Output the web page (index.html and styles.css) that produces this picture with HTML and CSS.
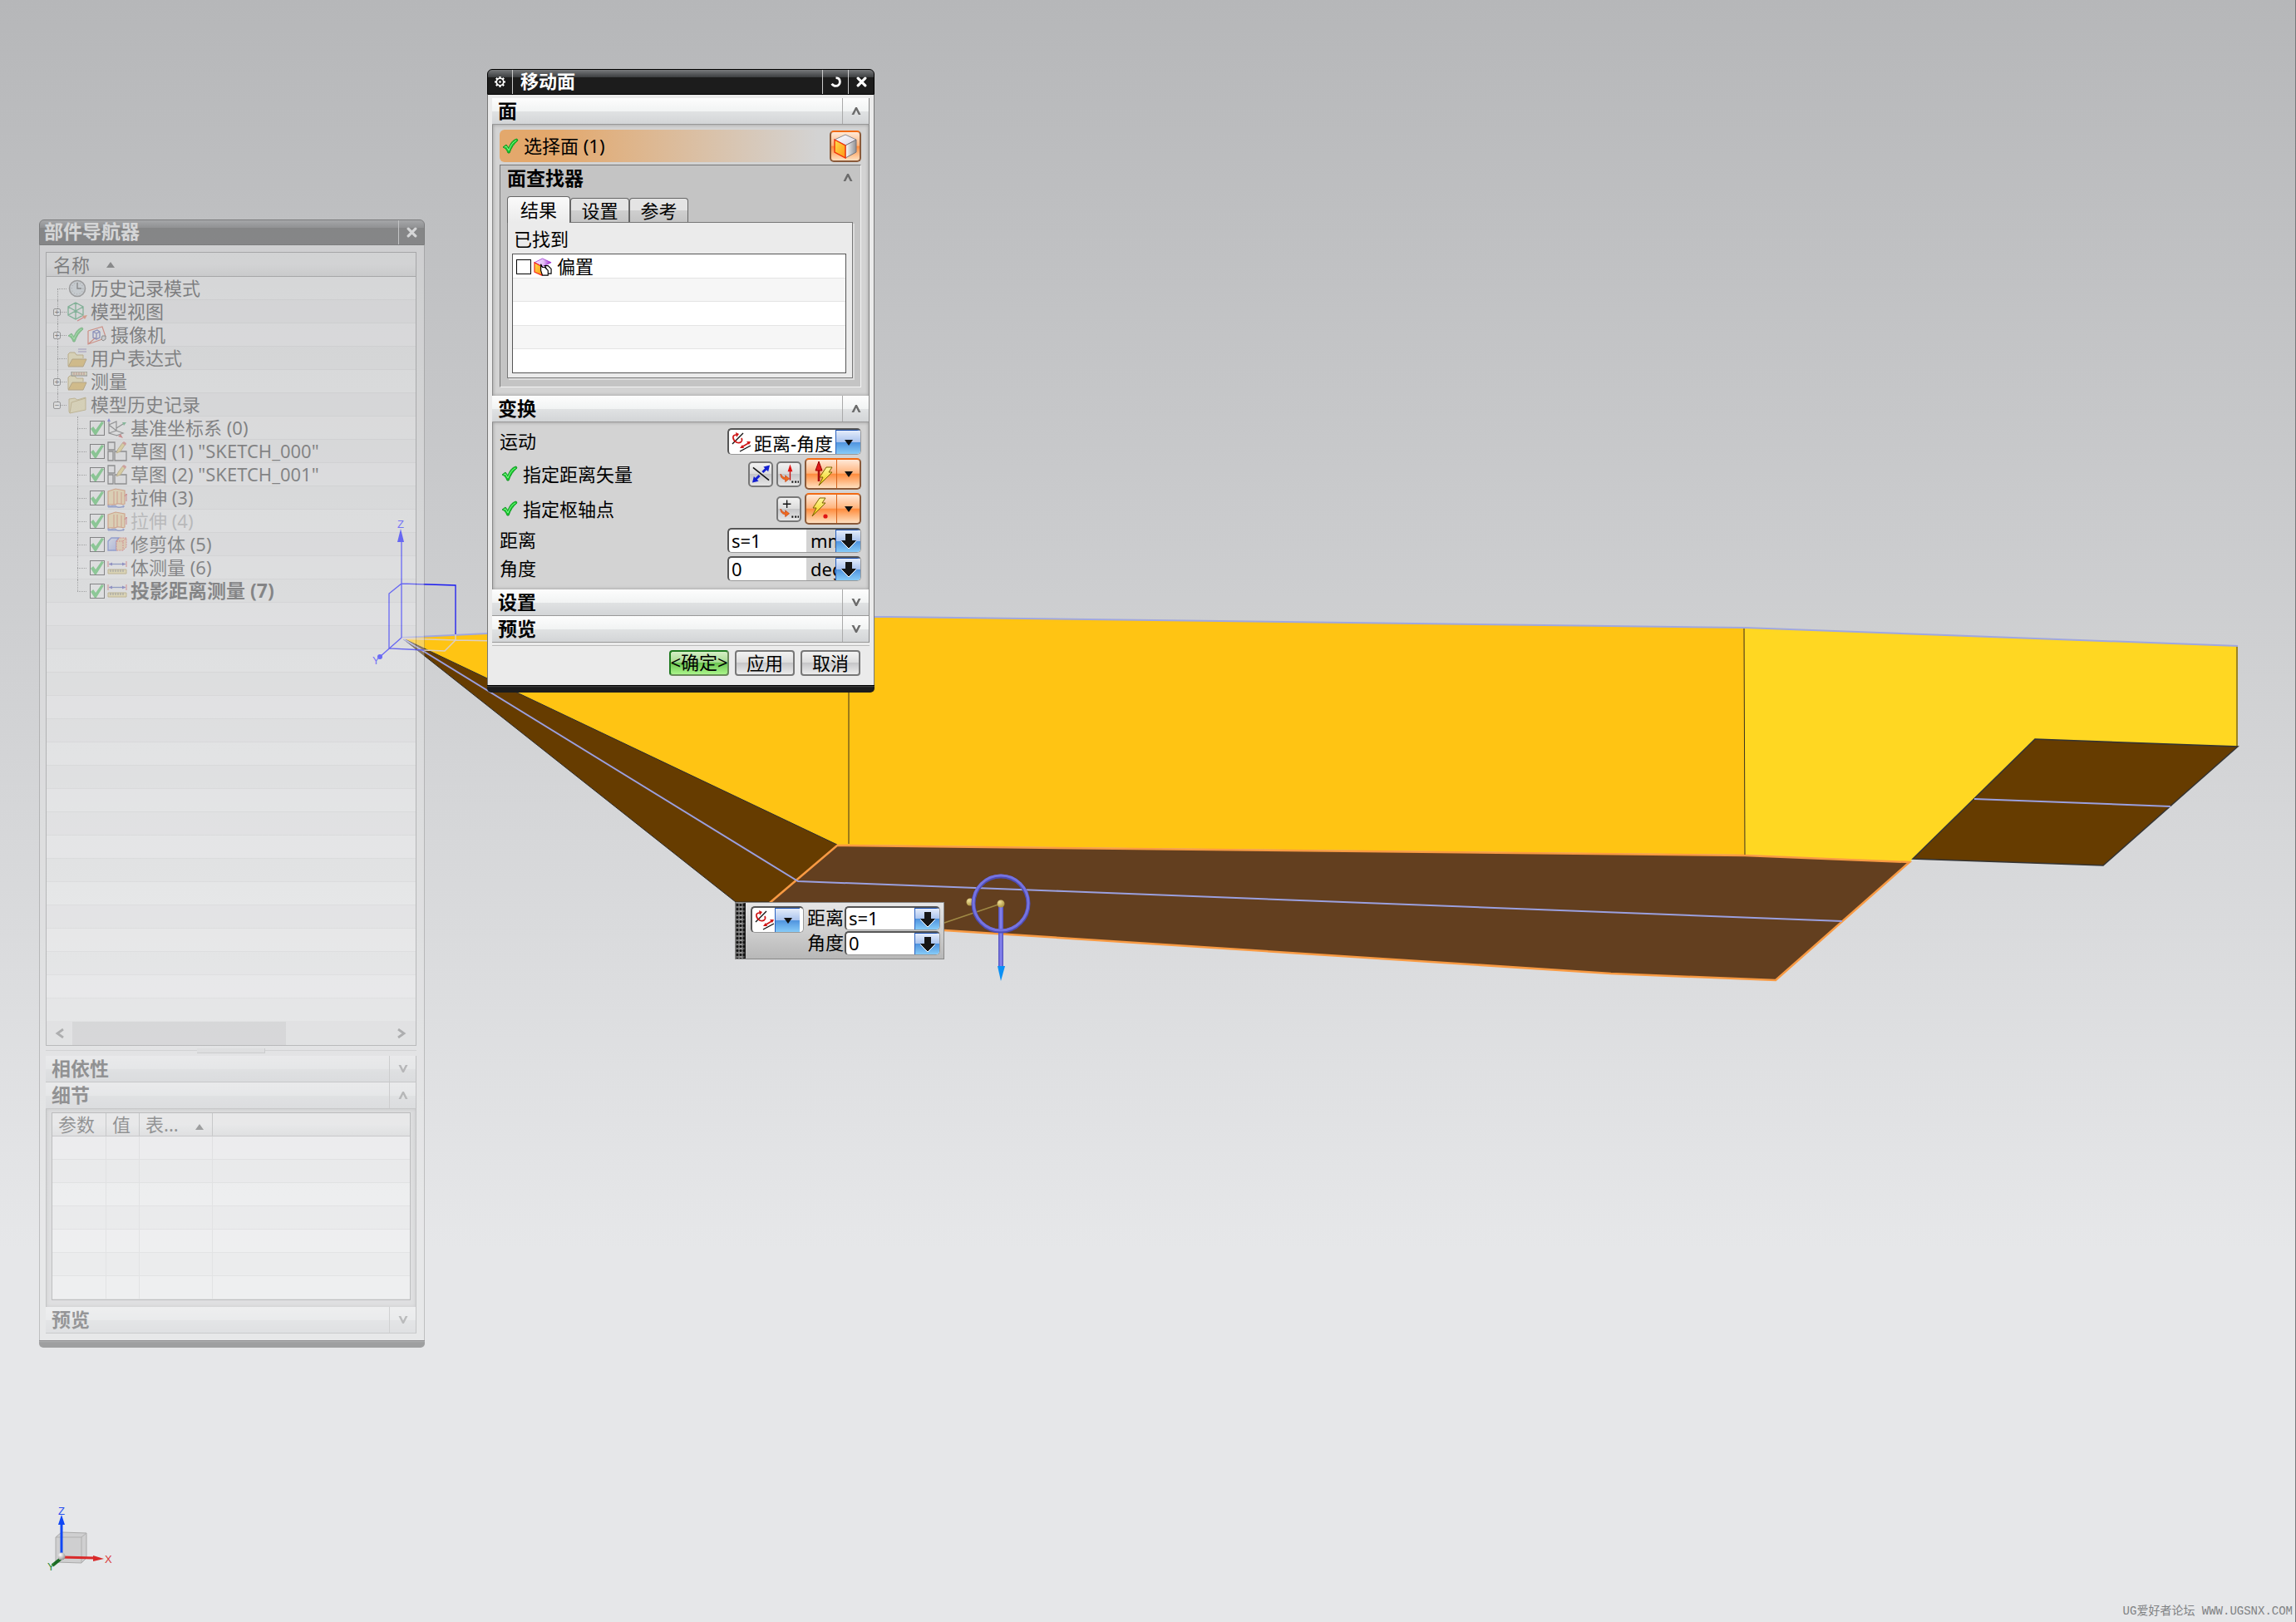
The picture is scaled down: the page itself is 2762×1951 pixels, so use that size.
FILE: index.html
```html
<!DOCTYPE html>
<html lang="zh-CN">
<head>
<meta charset="utf-8">
<title>移动面</title>
<link rel="stylesheet" href="styles.css">
</head>
<body>
<svg class="defs" width="0" height="0" aria-hidden="true">
  <defs>
    <linearGradient id="g-orange" x1="0" y1="0" x2="1" y2="1"><stop offset="0" stop-color="#ffe04a"/><stop offset="1" stop-color="#ff9416"/></linearGradient>
    <linearGradient id="g-white" x1="0" y1="0" x2="1" y2="0"><stop offset="0" stop-color="#fff"/><stop offset="1" stop-color="#8e8e92"/></linearGradient>
    <linearGradient id="g-top" x1="0" y1="0" x2="1" y2="1"><stop offset="0" stop-color="#fff"/><stop offset="1" stop-color="#d9d4e4"/></linearGradient>
    <linearGradient id="g-purple" x1="0" y1="0" x2="1" y2="0"><stop offset="0" stop-color="#f4e4ff"/><stop offset=".55" stop-color="#e3bdf7"/><stop offset="1" stop-color="#9422c8"/></linearGradient>
    <linearGradient id="g-bolt" x1="0" y1="0" x2="0" y2="1"><stop offset="0" stop-color="#fff9a0"/><stop offset="1" stop-color="#f0c800"/></linearGradient>
    <linearGradient id="g-blue" x1="0" y1="0" x2="1" y2="1"><stop offset="0" stop-color="#dfe6ff"/><stop offset="1" stop-color="#7186e8"/></linearGradient>
    <radialGradient id="g-ball" cx=".35" cy=".3" r=".8"><stop offset="0" stop-color="#fff"/><stop offset="1" stop-color="#8b8b8b"/></radialGradient>
    <radialGradient id="g-gold" cx=".35" cy=".3" r=".8"><stop offset="0" stop-color="#efe09a"/><stop offset="1" stop-color="#a58b35"/></radialGradient>
  </defs>
  <symbol id="i-check" viewBox="0 0 20 20"><path d="M1 11l4-3 3 4C10 6 13 2 18 1l1 2c-5 4-8 9-10 15H7C6 15 4 12 1 11z" fill="#17c92e" stroke="#0a8a1c" stroke-width=".8"/><path d="M3 11l2-1 3 5C10 9 13 5 17 3" fill="none" stroke="#86f58e" stroke-width="1"/></symbol>
  <symbol id="i-up" viewBox="0 0 12 12"><path d="M0 11L5 1h2l5 10H9L6 5l-3 6z" fill="#6b6b6b"/></symbol>
  <symbol id="i-down" viewBox="0 0 12 12"><path d="M0 1l5 10h2l5-10H9L6 7 3 1z" fill="#6b6b6b"/></symbol>
  <symbol id="i-left" viewBox="0 0 12 12"><path d="M10 1L3 6l7 5" fill="none" stroke="#555" stroke-width="2.800"/></symbol>
  <symbol id="i-right" viewBox="0 0 12 12"><path d="M2 1l7 5-7 5" fill="none" stroke="#555" stroke-width="2.800"/></symbol>
  <symbol id="i-close" viewBox="0 0 12 12"><path d="M2 2l8 8M10 2l-8 8" stroke="#fff" stroke-width="3" stroke-linecap="round" fill="none"/></symbol>
  <symbol id="i-gear" viewBox="0 0 14 14"><path d="M7 0v3M7 11v3M0 7h3M11 7h3M2 2l2 2M10 10l2 2M12 2l-2 2M4 10l-2 2" stroke="#fff" stroke-width="2.400"/><circle cx="7" cy="7" r="4.600" fill="none" stroke="#fff" stroke-width="1.800"/><circle cx="7" cy="7" r="1.400" fill="#fff"/></symbol>
  <symbol id="i-reset" viewBox="0 0 12 12"><path d="M6 1.500c3 0 4.500 2 4.500 4.500S8.500 10.500 6 10.500C4 10.500 2.500 9.500 1.500 8" fill="none" stroke="#fff" stroke-width="2.600"/></symbol>
  <symbol id="i-cube" viewBox="0 0 28 30"><path d="M14 1l13 6-13 7L1 7z" fill="url(#g-top)" stroke="#8c8c94"/><path d="M14 14l13-7v15l-13 7z" fill="url(#g-white)" stroke="#77777c"/><path d="M1 7l13 7v15L1 22z" fill="url(#g-orange)" stroke="#f0320a" stroke-width="1.400"/></symbol>
  <symbol id="i-offset" viewBox="0 0 24 24"><path d="M11 1l11 5-11 5L1 6z" fill="url(#g-purple)" stroke="#9c2fd0" stroke-width=".8"/><path d="M1 6l9 5v11L1 18z" fill="url(#g-orange)" stroke="#f5201a" stroke-width="1.200"/><path d="M14 10h4l4 4v6h-6v-6z" fill="#fff" stroke="#000" stroke-width="1.200"/><path d="M11 22l-2-6V8l2 4h3l4 4v6z" fill="#fff" stroke="#000" stroke-width="1.200"/></symbol>
  <symbol id="i-motion" viewBox="0 0 24 24"><path d="M1 14L14 1M10 23l13-7" stroke="#111" stroke-width="1.400"/><path d="M6 3C0 3 1 9 6 12c4 2 8-1 6-5" fill="none" stroke="#cf1717" stroke-width="1.700"/><path d="M5 0l4 2-3 4z" fill="#cf1717"/><path d="M12 18l10-6" stroke="#cf1717" stroke-width="1.600"/><path d="M10 19l3-4 2 4zM23 11l-5 0 3 4z" fill="#cf1717"/></symbol>
  <symbol id="i-reverse" viewBox="0 0 24 24"><path d="M2 4l20 16" stroke="#111" stroke-width="1.600"/><path d="M14 10l5-5M10 14l-5 5" stroke="#1420d0" stroke-width="3"/><path d="M23 1l-2 8-6-6zM1 23l2-8 6 6z" fill="#1420d0"/></symbol>
  <symbol id="i-vec" viewBox="0 0 24 24"><path d="M13 8v12" stroke="#c01010" stroke-width="1.400"/><path d="M13 0l3 9h-6z" fill="#d11"/><path d="M1 12c0 5 3 7 6 7v3l5-4-5-4v3c-2 0-4-2-6-5z" fill="#f26b1d" stroke="#c41" stroke-width=".8"/><path d="M15 22h2M19 22h2M22.500 22h2" stroke="#111" stroke-width="2.400"/></symbol>
  <symbol id="i-pt" viewBox="0 0 24 24"><path d="M9 1v10M4 6h10" stroke="#111" stroke-width="1.400"/><path d="M1 12c0 5 3 7 6 7v3l5-4-5-4v3c-2 0-4-2-6-5z" fill="#f26b1d" stroke="#c41" stroke-width=".8"/><path d="M15 22h2M19 22h2M22.500 22h2" stroke="#111" stroke-width="2.400"/></symbol>
  <symbol id="i-vecbolt" viewBox="0 0 30 32"><path d="M12 10v15" stroke="#a80f0f" stroke-width="2.600"/><path d="M12 1l4 11H8z" fill="#e01b1b" stroke="#900"/><path d="M21 8h7l-4 6h4L12 30l5-10h-4z" fill="url(#g-bolt)" stroke="#7a6200" stroke-width="1"/></symbol>
  <symbol id="i-ptbolt" viewBox="0 0 30 32"><path d="M13 3h7l-4 6h4L4 25l5-10H5z" fill="url(#g-bolt)" stroke="#7a6200" stroke-width="1"/><circle cx="20" cy="25" r="2.600" fill="#e01414"/></symbol>
  <symbol id="i-tri" viewBox="0 0 10 7"><path d="M0 0h10L5 7z" fill="#111"/></symbol>
  <symbol id="i-bigdown" viewBox="0 0 20 20"><path d="M6 1h8v8h5l-9 10-9-10h5z" fill="#161616"/><path d="M1 10l9 9 9-9" fill="none" stroke="#fff" stroke-width="1"/></symbol>
  <symbol id="i-sort" viewBox="0 0 10 7"><path d="M5 0l5 7H0z" fill="#222"/></symbol>
  <symbol id="i-clock" viewBox="0 0 24 24"><circle cx="12" cy="12" r="9.500" fill="#cfdbe2" stroke="#555" stroke-width="1.600"/><circle cx="12" cy="12" r="6.800" fill="none" stroke="#666" stroke-dasharray="1 2.500"/><path d="M12 5v7h5" fill="none" stroke="#222" stroke-width="1.400"/></symbol>
  <symbol id="i-view" viewBox="0 0 24 24"><path d="M10 1l9 5v10l-9 5-9-5V6zM1 6l9 5 9-5M10 1v20M1 16l9-5 9 5" fill="none" stroke="#0b8d43" stroke-width="1.300"/><path d="M12 23l9-5" stroke="#d22" stroke-width="1.400"/><path d="M24 16l-3 5-3-4z" fill="#e52"/></symbol>
  <symbol id="i-cam" viewBox="0 0 24 24"><path d="M1 7l17-5 4 12M1 7v16l17-6M1 23l9-8" fill="none" stroke="#e03012" stroke-width="1.200"/><path d="M7 8l5-2 3 2v7l-4 2-4-2zM7 8l4 2 4-2M11 10v7" fill="none" stroke="#2230a0" stroke-width="1.300"/><path d="M18 13h4v4l-3 2-2-2z" fill="#ddd" stroke="#222"/></symbol>
  <symbol id="i-fopen" viewBox="0 0 24 24"><path d="M1 21V7l2-2h6l2 3h8v4" fill="#f7e79a" stroke="#a88220"/><path d="M1 22l5-9h17l-4 9z" fill="#e6a81c" stroke="#946a10"/></symbol>
  <symbol id="i-expr" viewBox="0 0 24 24"><use href="#i-fopen"/><path d="M13 1h10M13 4h10" stroke="#5a4aa0" stroke-width="1.200"/></symbol>
  <symbol id="i-meas" viewBox="0 0 24 24"><use href="#i-fopen"/><path d="M5 0h19v5H5z" fill="#e8dca0" stroke="#333"/><path d="M8 1v3M11 1v3M14 1v3M17 1v3M20 1v3" stroke="#a33"/></symbol>
  <symbol id="i-fold" viewBox="0 0 24 24"><path d="M2 20V5l7-1 3 2 10-3v15L3 22z" fill="#f2e29a" stroke="#b09238"/><path d="M3 22L5 9l17-5" fill="none" stroke="#b09238"/></symbol>
  <symbol id="i-csys" viewBox="0 0 24 24"><path d="M2 4v14l10 3M2 8l9 7M2 8l9-4v11M11 15l8 3-8 3M11 12l8-5M2 18l9-3" fill="none" stroke="#333" stroke-width="1.200"/><path d="M2 0l2 4H0z" fill="#22c"/><path d="M23 5l-5 0 2 4z" fill="#194"/><path d="M19 24l-6-2 3-3z" fill="#c22"/></symbol>
  <symbol id="i-sketch" viewBox="0 0 24 24"><path d="M1 1h8v9H1zM1 12h6v11H1zM9 12h14v11H9z" fill="#f6f6f6" stroke="#222" stroke-width="1.300"/><path d="M11 14l2-5 6-8 3 2-6 9z" fill="#f0d25a" stroke="#8b6b1a" stroke-width=".8"/><path d="M18 2l2-2 3 2-1 3z" fill="#d9534a"/></symbol>
  <symbol id="i-extrude" viewBox="0 0 24 24"><path d="M1 20c3 4 7-1 10 2s6 1 9-1v2H1z" fill="#6f8fe8" stroke="#2a47b8"/><path d="M1 4l9-3 11 2v16c-3 2-5-1-9 0-4 2-7 0-11 1z" fill="#f9d88a" stroke="#d8601a" stroke-width="1.200"/><path d="M8 4v15M12 4v15M17 5v14" stroke="#d8481a" stroke-width="1"/><path d="M23 8v8M21 10l2-3 2 3" stroke="#c11" fill="none"/></symbol>
  <symbol id="i-trim" viewBox="0 0 24 24"><path d="M1 8l4-4h9l-3 4v11H1z" fill="url(#g-blue)" stroke="#2a47c8" stroke-width="1.300"/><path d="M11 8l4-4h8v11l-4 4h-8zM11 8h8v11M19 8l4-4" fill="#f5c98a" stroke="#d22" stroke-dasharray="2 1"/></symbol>
  <symbol id="i-ruler" viewBox="0 0 24 24"><path d="M1 4v7M23 4v7" stroke="#d22"/><path d="M2 7.500h20" stroke="#24a" stroke-width="1.300"/><path d="M2 7.500l4-2v4zM22 7.500l-4-2v4z" fill="#22a"/><path d="M1 14h22v5H1z" fill="#f3e08a" stroke="#a88a28"/><path d="M4 14v3M7 14v3M10 14v3M13 14v3M16 14v3M19 14v3" stroke="#444"/></symbol>
</svg>

<main class="viewport">
  <svg class="scene" viewBox="0 0 2762 1951" preserveAspectRatio="xMinYMin meet" role="img" aria-label="模型">
    <path d="M483 767L586 762 1022 742H1070L2099 755V1028L1007 1016z" fill="#ffc413"/>
    <path d="M2099 755L2692 777V898L2448 889 2301 1033 2297 1037 2099 1028z" fill="#ffd722"/>
    <path d="M483 767L1007 1016 928 1085 885 1085z" fill="#663c00" stroke="#2b2b2b"/>
    <path d="M2448 889L2692 898 2530 1041 2301 1033z" fill="#663c00" stroke="#333" stroke-width="1.500"/>
    <path d="M1007 1017L2099 1029 2297 1037 2136 1179 1938 1171 1136 1119 900 1108z" fill="#633f1f" stroke="#f89a43" stroke-width="2.500"/>
    <path d="M1021 742V1015M2098 755L2099 1028M2691 777V898" stroke="#3a3320" fill="none"/>
    <path d="M483 767L586 762 1022 742H1070L2099 755 2692 777" fill="none" stroke="#a0a7de" stroke-width="2"/>
    <path d="M483 767L960 1060 1280 1072 2216 1108M2375 961L2611 970" fill="none" stroke="#9ba0df" stroke-width="2"/>
    <path d="M483 768L548 770 600 771M548 763V770L535 783 510 782" fill="none" stroke="#dccfc4" stroke-width="1.500"/>
    <g fill="none" stroke="#1a1af0" stroke-width="1.300"><path d="M548 763V704L483 702 468 714V780L510 782M483 767L457 790M483 650V767"/></g>
    <path d="M482 636l4 16h-8z" fill="#1a1af0"/><circle cx="457" cy="790" r="3" fill="#1a1af0"/>
    <text x="478" y="635" class="axis" fill="#2a2af0">Z</text><text x="448" y="799" class="axis" fill="#2a2af0">Y</text>

    <path d="M1130 1112L1204 1087" stroke="#a08a45" stroke-width="1.500"/>
    <circle cx="1167" cy="1085" r="4.500" fill="url(#g-gold)"/>
    <path d="M1204 1087V1162" stroke="#5a58c4" stroke-width="6"/><path d="M1204 1087V1162" stroke="#8280ec" stroke-width="3"/>
    <circle cx="1204" cy="1087" r="33" fill="none" stroke="#4e4cb4" stroke-width="5"/><circle cx="1204" cy="1086" r="33" fill="none" stroke="#7573e0" stroke-width="3"/>
    <path d="M1200 1162h9l-5 18z" fill="#0a90f5"/><circle cx="1204" cy="1087" r="4.500" fill="url(#g-gold)"/>

    <path d="M67 1849l7-6 30 1v30l-6 6-31-1z" fill="#cfcfd0" stroke="#aaa"/><path d="M67 1849h31v31M98 1849l6-5M74 1843v31h30" fill="none" stroke="#b0b0b0"/>
    <path d="M74 1872V1832" stroke="#1148f5" stroke-width="3"/><path d="M74 1822l4 12h-8z" fill="#1148f5"/>
    <path d="M74 1873L114 1874" stroke="#d92b2b" stroke-width="3"/><path d="M125 1875l-13-4v7z" fill="#d92b2b"/>
    <path d="M73 1875L63 1883" stroke="#1b6b25" stroke-width="4"/><circle cx="74" cy="1872" r="4.500" fill="url(#g-ball)"/>
    <text x="70" y="1822" class="axis" fill="#2a50f0">Z</text><text x="126" y="1880" class="axis" fill="#d93a3a">X</text><text x="57" y="1889" class="axis" fill="#2d8a3a">Y</text>
  </svg>

  <section class="window navigator" aria-label="部件导航器">
    <header class="titlebar"><h2>部件导航器</h2><button class="tb-btn" aria-label="关闭"><svg><use href="#i-close"/></svg></button></header>
    <div class="window-body">
      <div class="tree">
        <div class="col-head"><span>名称</span><svg><use href="#i-sort"/></svg></div>
        <ul class="rows">
          <li class="first"><span class="exp none"></span><svg><use href="#i-clock"/></svg><span>历史记录模式</span></li>
          <li><button class="exp" aria-label="展开">+</button><svg><use href="#i-view"/></svg><span>模型视图</span></li>
          <li><button class="exp" aria-label="展开">+</button><svg class="tick"><use href="#i-check"/></svg><svg><use href="#i-cam"/></svg><span>摄像机</span></li>
          <li><span class="exp none"></span><svg><use href="#i-expr"/></svg><span>用户表达式</span></li>
          <li><button class="exp" aria-label="展开">+</button><svg><use href="#i-meas"/></svg><span>测量</span></li>
          <li class="last"><button class="exp" aria-label="折叠">−</button><svg><use href="#i-fold"/></svg><span>模型历史记录</span></li>
          <li class="child"><input type="checkbox" id="n0" checked><svg><use href="#i-csys"/></svg><label for="n0">基准坐标系 (0)</label></li>
          <li class="child"><input type="checkbox" id="n1" checked><svg><use href="#i-sketch"/></svg><label for="n1">草图 (1) "SKETCH_000"</label></li>
          <li class="child"><input type="checkbox" id="n2" checked><svg><use href="#i-sketch"/></svg><label for="n2">草图 (2) "SKETCH_001"</label></li>
          <li class="child"><input type="checkbox" id="n3" checked><svg><use href="#i-extrude"/></svg><label for="n3">拉伸 (3)</label></li>
          <li class="child dim"><input type="checkbox" id="n4" checked><svg><use href="#i-extrude"/></svg><label for="n4">拉伸 (4)</label></li>
          <li class="child"><input type="checkbox" id="n5" checked><svg><use href="#i-trim"/></svg><label for="n5">修剪体 (5)</label></li>
          <li class="child"><input type="checkbox" id="n6" checked><svg><use href="#i-ruler"/></svg><label for="n6">体测量 (6)</label></li>
          <li class="child last strong"><input type="checkbox" id="n7" checked><svg><use href="#i-ruler"/></svg><label for="n7">投影距离测量 (7)</label></li>
        </ul>
        <div class="hscroll"><svg><use href="#i-left"/></svg><span class="thumb"></span><svg class="right"><use href="#i-right"/></svg></div>
      </div>
      <div class="splitter"><span></span></div>
      <button class="section-head"><span>相依性</span><i><svg><use href="#i-down"/></svg></i></button>
      <button class="section-head"><span>细节</span><i><svg><use href="#i-up"/></svg></i></button>
      <div class="section-box details">
        <table>
          <thead><tr><th class="c1">参数</th><th class="c2">值</th><th class="c3"><span>表...</span><svg><use href="#i-sort"/></svg></th><th></th></tr></thead>
          <tbody>
            <tr><td></td><td></td><td></td><td></td></tr><tr><td></td><td></td><td></td><td></td></tr><tr><td></td><td></td><td></td><td></td></tr><tr><td></td><td></td><td></td><td></td></tr><tr><td></td><td></td><td></td><td></td></tr><tr><td></td><td></td><td></td><td></td></tr><tr><td></td><td></td><td></td><td></td></tr>
          </tbody>
        </table>
      </div>
      <button class="section-head"><span>预览</span><i><svg><use href="#i-down"/></svg></i></button>
    </div>
    <div class="window-foot"></div>
  </section>

  <section class="window dialog" role="dialog" aria-label="移动面">
    <header class="titlebar"><button class="tb-btn menu" aria-label="选项"><svg><use href="#i-gear"/></svg></button><h2>移动面</h2><button class="tb-btn" aria-label="重置"><svg><use href="#i-reset"/></svg></button><button class="tb-btn" aria-label="关闭"><svg><use href="#i-close"/></svg></button></header>
    <div class="window-body">
      <button class="section-head"><span>面</span><i><svg><use href="#i-up"/></svg></i></button>
      <div class="section-box">
        <div class="select-row"><svg class="ok"><use href="#i-check"/></svg><span>选择面 (1)</span><button class="hot cube" aria-label="面"><svg><use href="#i-cube"/></svg></button></div>
        <div class="group">
          <div class="group-head"><span>面查找器</span><svg><use href="#i-up"/></svg></div>
          <div class="tabs" role="tablist"><button role="tab" class="on">结果</button><button role="tab">设置</button><button role="tab">参考</button></div>
          <div class="tab-panel">
            <p>已找到</p>
            <ul class="found"><li><input type="checkbox" id="off"><svg><use href="#i-offset"/></svg><label for="off">偏置</label></li></ul>
          </div>
        </div>
      </div>
      <button class="section-head"><span>变换</span><i><svg><use href="#i-up"/></svg></i></button>
      <div class="section-box form">
        <div class="row"><label for="motion">运动</label><div class="combo wide"><svg class="mo"><use href="#i-motion"/></svg><select id="motion"><option>距离-角度</option></select><span class="drop"><svg class="tri"><use href="#i-tri"/></svg></span></div></div>
        <div class="row tall"><svg class="ok"><use href="#i-check"/></svg><span class="grow">指定距离矢量</span><button class="tool" aria-label="反向"><svg><use href="#i-reverse"/></svg></button><button class="tool" aria-label="矢量对话框"><svg><use href="#i-vec"/></svg></button><div class="hot split"><button aria-label="自动判断矢量"><svg><use href="#i-vecbolt"/></svg></button><button aria-label="更多"><svg class="tri"><use href="#i-tri"/></svg></button></div></div>
        <div class="row tall"><svg class="ok"><use href="#i-check"/></svg><span class="grow">指定枢轴点</span><button class="tool" aria-label="点对话框"><svg><use href="#i-pt"/></svg></button><div class="hot split"><button aria-label="自动判断点"><svg><use href="#i-ptbolt"/></svg></button><button aria-label="更多"><svg class="tri"><use href="#i-tri"/></svg></button></div></div>
        <div class="row"><label for="dist">距离</label><div class="combo wide num"><input id="dist" value="s=1"><span class="unit">mm</span><button class="drop" aria-label="距离选项"><svg><use href="#i-bigdown"/></svg></button></div></div>
        <div class="row"><label for="ang">角度</label><div class="combo wide num"><input id="ang" value="0"><span class="unit">deg</span><button class="drop" aria-label="角度选项"><svg><use href="#i-bigdown"/></svg></button></div></div>
      </div>
      <button class="section-head"><span>设置</span><i><svg><use href="#i-down"/></svg></i></button>
      <button class="section-head"><span>预览</span><i><svg><use href="#i-down"/></svg></i></button>
      <div class="actions"><button class="ok-btn"><span>&lt;</span>确定<span>&gt;</span></button><button>应用</button><button>取消</button></div>
    </div>
    <div class="window-foot"></div>
  </section>

  <div class="floating">
    <span class="grip"></span>
    <div class="combo mini"><svg class="mo"><use href="#i-motion"/></svg><button class="drop" aria-label="运动类型"><svg class="tri"><use href="#i-tri"/></svg></button></div>
    <div class="fields">
      <label for="fdist">距离</label><div class="combo num"><input id="fdist" value="s=1"><button class="drop" aria-label="距离选项"><svg><use href="#i-bigdown"/></svg></button></div>
      <label for="fang">角度</label><div class="combo num"><input id="fang" value="0"><button class="drop" aria-label="角度选项"><svg><use href="#i-bigdown"/></svg></button></div>
    </div>
  </div>

  <p class="credit">UG爱好者论坛 WWW.UGSNX.COM</p>
</main>
</body>
</html>
```
FILE: styles.css
```css
* { box-sizing: border-box; }
html, body { height: 100%; }
body, h2, p, ul { margin: 0; padding: 0; }
ul { list-style: none; }
body, button, input, select {
  font-family: "Noto Sans", "Noto Sans CJK SC", sans-serif;
  font-size: 22px;
  color: #000;
}
body { line-height: 28px; }
button { border: 0; padding: 0; background: none; line-height: 28px; }
svg { display: block; flex: none; }
.defs { position: absolute; }

.viewport {
  position: relative;
  min-height: 100%;
  overflow: hidden;
  background: linear-gradient(#b6b7b9, #e6e7e9 77%);
  box-shadow: inset -1px 0 #77787a;
}
.scene { position: absolute; inset: 0; width: 100%; height: 100%; }
.axis { font: 13px "Liberation Sans", sans-serif; }

/* floating windows */
.window { position: absolute; }
.navigator { left: 47px; top: 264px; width: 464px; opacity: .35; }
.dialog { left: 586px; top: 83px; width: 466px; }
.titlebar {
  display: flex;
  align-items: stretch;
  height: 31px;
  border: 1px solid #000;
  border-radius: 6px 6px 0 0;
  background: linear-gradient(#77797b, #3c3e40 9px, #1c1c1c 9px);
  overflow: hidden;
}
.titlebar h2 {
  flex: 1;
  padding-left: 5px;
  font-size: 23px;
  line-height: 26px;
  font-weight: 700;
  color: #fff;
}
.dialog .titlebar h2 { padding-left: 9px; font-size: 22px; }
.tb-btn { display: grid; place-items: center; width: 31px; border-left: 1px solid #ccc; }
.tb-btn.menu { width: 30px; border-left: 0; border-right: 1px solid #ccc; }
.tb-btn svg { width: 13px; height: 13px; }
.window-body {
  border: solid #777;
  border-width: 0 1px;
  padding: 4px 5px 0;
  background: #ebebeb;
}
.navigator .window-body { padding: 8px 9px 8px 7px; }
.window-foot {
  height: 9px;
  border-radius: 0 0 5px 5px;
  border-top: 1px solid #000;
  background: linear-gradient(#444, #1c1c1c 2px);
}

.section-head {
  display: flex;
  width: 100%;
  height: 32px;
  border-bottom: 1px solid #999;
  border-right: 1px solid #888;
  background: linear-gradient(#fdfdfd, #f1f3f3 52%, #e0e2e3 52%, #d3d5d7);
  text-align: left;
  font-size: 23px;
  font-weight: 700;
  line-height: 30px;
}
.section-head span { flex: 1; padding-left: 7px; }
.section-head i { display: grid; place-items: center; width: 32px; border-left: 1px solid #aaa; }
.section-head svg { width: 12px; height: 11px; }
.section-box {
  border: solid #888;
  border-width: 0 1px;
  padding: 6px 9px 10px 8px;
  background: #d3d3d3;
  box-shadow: inset 0 0 4px #999;
}

/* part navigator */
.tree { border: 1px solid #777; background: #f4f4f4; }
.col-head {
  display: flex;
  align-items: center;
  gap: 20px;
  height: 29px;
  padding-left: 8px;
  border-bottom: 1px solid #777;
  background: linear-gradient(#f5f5f5 50%, #dcdcdc);
}
.col-head svg, .details svg { width: 10px; height: 7px; }
.rows {
  height: 895px;
  background: repeating-linear-gradient(#fff 0 27px, #e4e4e4 27px 28px, #f6f6f6 28px 55px, #e4e4e4 55px 56px);
}
.rows li { position: relative; display: flex; align-items: center; height: 28px; padding-left: 8px; }
.rows svg { width: 24px; height: 24px; }
.rows svg.tick { width: 20px; height: 20px; margin-right: 4px; }
.rows li > span:last-child, .rows label { padding: 0 0 2px 4px; }
.rows li::before { content: ""; position: absolute; left: 13px; top: 0; bottom: 0; border-left: 1px dotted #555; }
.rows li.first::before { top: 14px; }
.rows li.last::before { bottom: 14px; }
.rows li::after { content: ""; position: absolute; left: 13px; top: 14px; width: 11px; border-top: 1px dotted #555; }
.rows .child { padding-left: 52px; }
.rows .child::before, .rows .child::after { left: 37px; }
.exp {
  position: relative;
  z-index: 1;
  width: 9px;
  height: 9px;
  margin-right: 8px;
  border: 1px solid #444;
  border-radius: 2px;
  background: #fff;
  font-size: 10px;
  line-height: 7px;
}
.exp.none { visibility: hidden; }
input[type="checkbox"] {
  appearance: none;
  flex: none;
  width: 18px;
  height: 18px;
  margin: 0 3px 0 0;
  border: 1px solid #000;
  background: #fff;
}
input[type="checkbox"]:checked::after {
  content: "";
  display: block;
  height: 16px;
  background: #19bd30;
  clip-path: polygon(0 55%, 20% 38%, 38% 62%, 82% 0, 100% 8%, 42% 100%, 30% 100%);
}
.dim label { color: #999; }
.strong label { font-size: 23px; font-weight: 700; }
.hscroll { display: flex; align-items: center; height: 29px; background: #e9e9e9; }
.hscroll svg { width: 12px; height: 12px; margin: 0 9px 0 10px; }
.hscroll .right { margin-left: auto; margin-right: 11px; }
.hscroll .thumb { width: 257px; height: 28px; background: #cbcbcb; }
.splitter { display: grid; place-items: center; height: 12px; background: linear-gradient(#ebebeb 5px, #bbb 5px 6px, #ebebeb 6px); }
.splitter span { width: 82px; height: 6px; border: solid #aaa; border-width: 0 1px 1px 0; background: #ddd; }
.details { padding: 4px 6px 8px; }
table { width: 100%; border: 1px solid #777; border-spacing: 0; table-layout: fixed; background: #fff; }
th, td { height: 28px; padding: 0; border: solid #ddd; border-width: 0 1px 1px 0; }
th {
  padding-left: 7px;
  border-color: #999;
  text-align: left;
  font-weight: 400;
  line-height: 27px;
  white-space: nowrap;
  background: linear-gradient(#f5f5f5 50%, #dcdcdc);
}
th:last-child, td:last-child { border-right: 0; }
tr:nth-child(even) td { background: #f6f6f6; }
.c1 { width: 65px; }
.c2 { width: 40px; }
.c3 { width: 88px; }
.c3 svg { display: inline-block; margin-left: 20px; vertical-align: middle; }

/* move face dialog */
.ok { width: 20px; height: 20px; }
.select-row {
  display: flex;
  align-items: center;
  height: 39px;
  padding-left: 3px;
  border-radius: 6px;
  background: linear-gradient(90deg, #e3a86c 15%, #d3d3d3 88%);
}
.select-row span { flex: 1; padding: 0 0 2px 6px; }
.hot {
  border: 2px solid #8a5a3a;
  border-top-color: #f26a13;
  border-radius: 5px;
  background: linear-gradient(#ffe9d8, #ffb27a 48%, #ff8a3a 50%, #ffe0c0);
}
.cube { display: grid; place-items: center; width: 38px; height: 38px; }
.cube svg { width: 28px; height: 30px; }
.group { margin-top: 3px; border: 1px solid #888; border-color: #777 #f4f4f4 #f4f4f4 #777; padding: 0 9px 10px 8px; background: #c4c4c4; }
.group-head { display: flex; justify-content: space-between; align-items: center; height: 37px; padding-bottom: 8px; font-size: 23px; font-weight: 700; }
.group-head svg { width: 12px; height: 11px; }
.tabs { display: flex; align-items: flex-end; height: 31px; }
.tabs button {
  width: 71px;
  height: 29px;
  border: 1px solid #666;
  border-bottom: 0;
  border-radius: 4px 4px 0 0;
  background: linear-gradient(#e4e4e4 50%, #cfcfcf 50%, #c4c4c4);
  line-height: 26px;
}
.tabs .on { position: relative; z-index: 1; width: 76px; height: 32px; margin-bottom: -1px; padding-bottom: 2px; background: linear-gradient(#fafafa, #ebebeb); }
.tab-panel { border: 1px solid #777; box-shadow: 2px 2px #ddd; padding: 0 7px 5px 5px; background: #ebebeb; }
.tab-panel p { height: 37px; padding-left: 2px; line-height: 38px; }
.found {
  height: 144px;
  border: 1px solid #555;
  padding: 1px;
  background: repeating-linear-gradient(#fff 0 28px, #e4e4e4 28px 29px, #f6f6f6 29px 56px, #e4e4e4 56px 57px);
}
.found li { display: flex; align-items: center; height: 28px; padding-left: 3px; }
.found svg { width: 23px; height: 23px; }
.found label { padding: 0 0 2px 5px; }
.form { display: flex; flex-direction: column; gap: 4px; padding-top: 7px; }
.row { display: flex; align-items: center; justify-content: space-between; gap: 4px; }
.row label { padding-bottom: 2px; }
.row.tall { padding-left: 2px; }
.row .grow { flex: 1; padding-left: 2px; }
.combo {
  display: flex;
  align-items: center;
  height: 32px;
  overflow: hidden;
  border: 2px solid #777;
  border-color: #555 #999 #999 #555;
  border-width: 2px 1px 1px 2px;
  border-radius: 5px;
  background: #fff;
}
.combo.num { height: 30px; }
.combo.wide { width: 161px; }
.combo .mo { width: 24px; height: 24px; margin-left: 3px; }
.combo select { appearance: none; flex: 1; min-width: 0; height: 28px; margin: 0; border: 0; padding: 0 0 2px 3px; background: none; }
.combo input { flex: 1; min-width: 0; height: 27px; border: 0; padding: 0 0 2px 3px; background: none; }
.unit { width: 35px; height: 28px; padding-left: 5px; overflow: hidden; background: #d3d3d3; line-height: 26px; }
.drop {
  display: grid;
  place-items: center;
  flex: none;
  width: 30px;
  height: 100%;
  border-top: 1px solid #1a4fae;
  border-left: 1px solid #2a62c0;
  background: linear-gradient(#e4ecfa, #a9c3ee 50%, #4f93de 50%, #86cbf8);
}
.drop svg { width: 20px; height: 20px; }
svg.tri, .drop svg.tri { width: 10px; height: 7px; }
.tool {
  display: grid;
  place-items: center;
  width: 30px;
  height: 31px;
  border: 2px solid #777;
  border-radius: 5px;
  background: linear-gradient(#f2f2f2, #dadada 50%, #c6c6c8 50%, #e6e6e6);
}
.tool svg { width: 23px; height: 24px; }
.split { display: flex; width: 68px; height: 38px; }
.split button { display: grid; place-items: center; flex: 1; }
.split button:first-child { flex: none; width: 37px; border-right: 1px solid #d4621c; }
.split button:first-child svg { width: 30px; height: 32px; }
.actions { display: flex; justify-content: flex-end; gap: 7px; margin-top: 3px; border-top: 1px solid #bbb; padding: 5px 11px 11px 0; }
.actions button {
  width: 72px;
  height: 31px;
  border: 2px solid #777;
  border-radius: 4px;
  background: linear-gradient(#f2f2f2, #dcdcdc 50%, #c6c6c8 50%, #ececec);
  line-height: 25px;
  white-space: nowrap;
}
.actions .ok-btn {
  display: flex;
  justify-content: center;
  border-color: #1f7a1f #6a8a5a #6a8a5a #1f7a1f;
  background: linear-gradient(#d5efc6, #a3d98c 50%, #6cc552 50%, #aaf58a);
}

/* on-screen input box */
.floating {
  position: absolute;
  left: 884px;
  top: 1085px;
  display: flex;
  align-items: flex-start;
  border: 1px solid #888;
  background: linear-gradient(#e6e6e6, #b8b8b8);
}
.grip {
  align-self: stretch;
  width: 12px;
  background: radial-gradient(circle, #111 1px, transparent 2px) 0 0 / 4px 5px, linear-gradient(90deg, #666, #999 60%, #111);
}
.mini { width: 64px; margin: 4px 4px 0 6px; }
.fields { display: grid; grid-template-columns: 45px 115px; row-gap: 1px; padding: 4px 4px 4px 0; }
.fields .combo.num { height: 29px; }
.fields label { line-height: 26px; }

.credit {
  position: absolute;
  right: 4px;
  bottom: 3px;
  font: 14px/20px "Liberation Mono", "Noto Sans CJK SC", monospace;
  color: #808284;
  white-space: pre;
}
```
